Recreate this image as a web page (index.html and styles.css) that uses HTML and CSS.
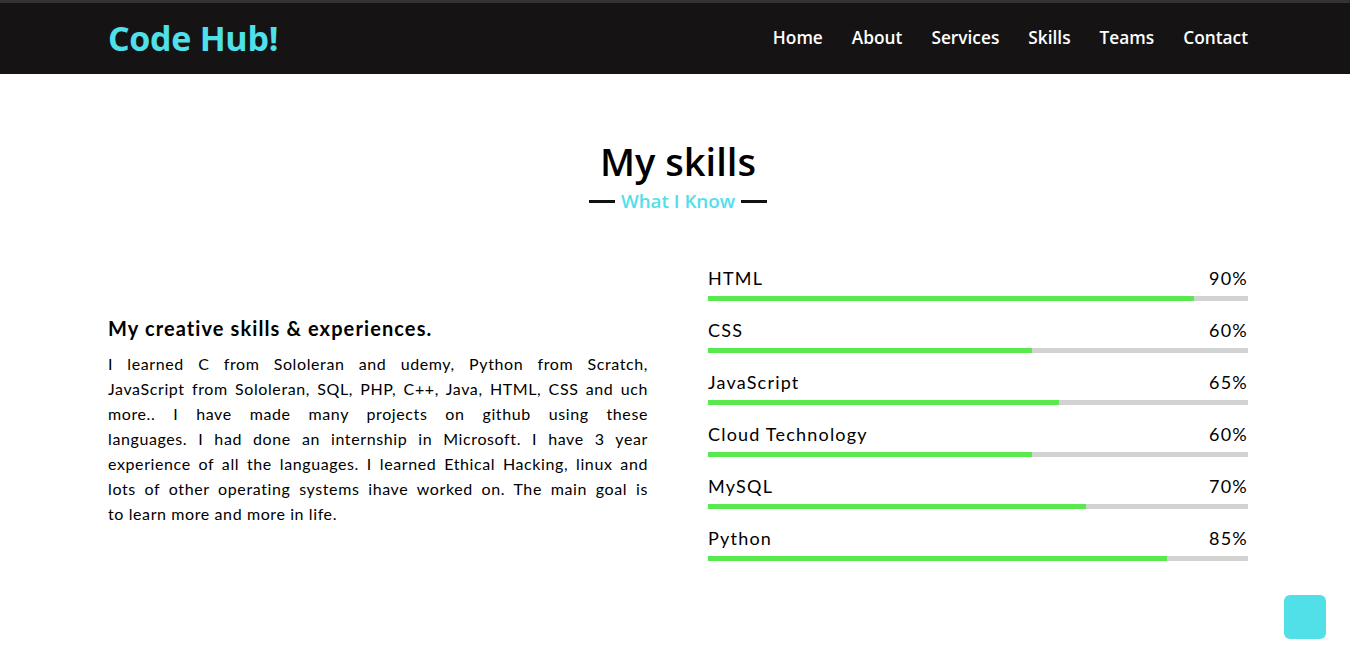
FILE: index.html
```html
<!DOCTYPE html>
<html lang="en">
<head>
<meta charset="utf-8">
<title>Code Hub! - Skills</title>
<link rel="stylesheet" href="styles.css">
</head>
<body>
<header class="navbar">
  <div class="container nav-inner">
    <a class="logo" href="#">Code Hub!</a>
    <ul class="menu">
      <li><a href="#">Home</a></li>
      <li><a href="#">About</a></li>
      <li><a href="#">Services</a></li>
      <li><a href="#">Skills</a></li>
      <li><a href="#">Teams</a></li>
      <li><a href="#">Contact</a></li>
    </ul>
  </div>
</header>

<section class="skills">
  <div class="container">
    <h2 class="title">My skills</h2>
    <div class="subtitle"><span class="dash"></span><span class="sub-text">What I Know</span><span class="dash"></span></div>
    <div class="skills-content">
      <div class="column left">
        <div class="text">My creative skills &amp; experiences.</div>
        <p>
          <span class="ln">I learned C from Sololeran and udemy, Python from Scratch,</span>
          <span class="ln">JavaScript from Sololeran, SQL, PHP, C++, Java, HTML, CSS and uch</span>
          <span class="ln">more.. I have made many projects on github using these</span>
          <span class="ln">languages. I had done an internship in Microsoft. I have 3 year</span>
          <span class="ln">experience of all the languages. I learned Ethical Hacking, linux and</span>
          <span class="ln">lots of other operating systems ihave worked on. The main goal is</span>
          <span class="ln">to learn more and more in life.</span>
        </p>
      </div>
      <div class="column right">
        <div class="bars">
          <div class="info"><span>HTML</span><span>90%</span></div>
          <div class="line"><div class="fill" style="width:90%"></div></div>
        </div>
        <div class="bars">
          <div class="info"><span>CSS</span><span>60%</span></div>
          <div class="line"><div class="fill" style="width:60%"></div></div>
        </div>
        <div class="bars">
          <div class="info"><span>JavaScript</span><span>65%</span></div>
          <div class="line"><div class="fill" style="width:65%"></div></div>
        </div>
        <div class="bars">
          <div class="info"><span>Cloud Technology</span><span>60%</span></div>
          <div class="line"><div class="fill" style="width:60%"></div></div>
        </div>
        <div class="bars">
          <div class="info"><span>MySQL</span><span>70%</span></div>
          <div class="line"><div class="fill" style="width:70%"></div></div>
        </div>
        <div class="bars">
          <div class="info"><span>Python</span><span>85%</span></div>
          <div class="line"><div class="fill" style="width:85%"></div></div>
        </div>
      </div>
    </div>
  </div>
</section>

<a class="scroll-up" href="#" aria-label="Scroll to top"></a>
</body>
</html>
```

FILE: styles.css
```css
* {
  margin: 0;
  padding: 0;
  box-sizing: border-box;
}

html, body {
  background: #fff;
}

body {
  font-family: "Lato", "Liberation Sans", sans-serif;
  color: #000;
}

a {
  text-decoration: none;
}

.container {
  width: 1140px;
  margin-left: calc(50% - 567px);
}

.navbar {
  background: #151314;
  border-top: 3px solid #333;
  height: 74px;
}

.nav-inner {
  height: 71px;
  display: flex;
  align-items: center;
  justify-content: space-between;
}

.logo {
  font-family: "Open Sans", "Liberation Sans", sans-serif;
  font-size: 34px;
  font-weight: 700;
  color: #4fe0ea;
  letter-spacing: -0.3px;
  margin-top: -2px;
}

.menu {
  list-style: none;
  display: flex;
  gap: 29px;
  margin-top: -2px;
}

.menu a {
  font-family: "Open Sans", "Liberation Sans", sans-serif;
  font-size: 17.3px;
  font-weight: 600;
  color: #fff;
}

.skills {
  padding-top: 62px;
}

.title {
  text-align: center;
  font-family: "Open Sans", "Liberation Sans", sans-serif;
  font-size: 38px;
  font-weight: 600;
  line-height: 50px;
}

.subtitle {
  display: flex;
  justify-content: center;
  align-items: center;
  gap: 6px;
  margin-top: 2px;
}

.dash {
  width: 26px;
  height: 3px;
  background: #111;
}

.sub-text {
  font-family: "Open Sans", "Liberation Sans", sans-serif;
  font-size: 18.8px;
  font-weight: 600;
  color: #4fe0ea;
  line-height: 26px;
}

.skills-content {
  display: flex;
  justify-content: space-between;
  align-items: center;
  margin-top: 49px;
}

.column {
  width: 540px;
}

.left {
  padding-top: 15px;
}

.left .text {
  font-size: 20px;
  font-weight: 700;
  letter-spacing: 1.1px;
  line-height: 30px;
  margin-bottom: 8px;
}

.left p {
  font-size: 16px;
  line-height: 25px;
  letter-spacing: 0.6px;
  text-align: justify;
}

.ln {
  display: block;
  text-align-last: justify;
}

.ln:last-child {
  text-align-last: auto;
}

.bars {
  margin-bottom: 14px;
}

.bars:last-child {
  margin-bottom: 0;
}

.info {
  display: flex;
  justify-content: space-between;
  font-size: 18px;
  letter-spacing: 1.2px;
  line-height: 30px;
}

.line {
  height: 5px;
  background: #d2d2d2;
  margin-top: 3px;
}

.fill {
  height: 100%;
  background: #5ae84f;
}

.scroll-up {
  position: fixed;
  right: 24px;
  bottom: 30px;
  width: 42px;
  height: 44px;
  border-radius: 6px;
  background: #52e0e8;
}
```
